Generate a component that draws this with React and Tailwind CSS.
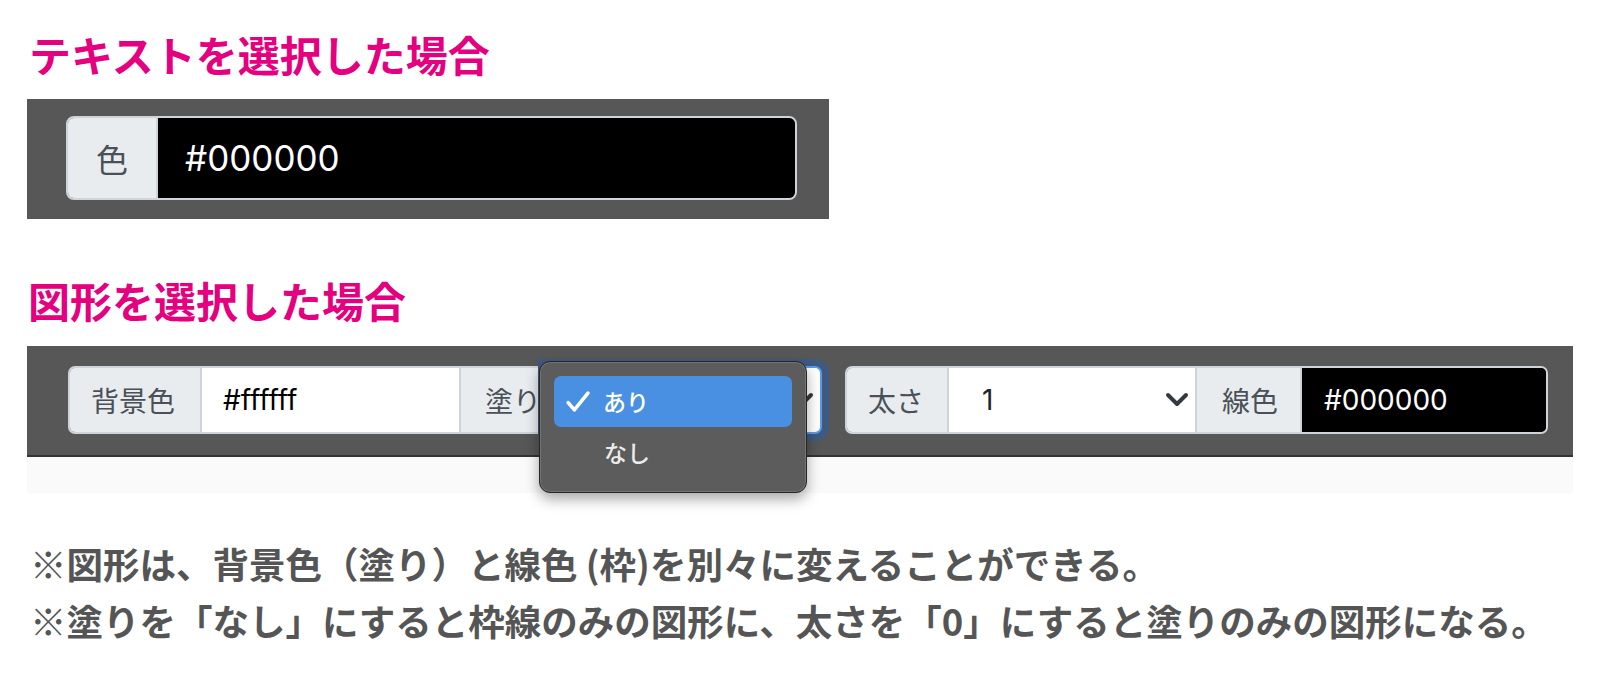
import React from 'react';

const jp = { fontFamily: '"Noto Sans CJK JP", "Noto Sans", sans-serif' };
const latin = { fontFamily: 'Inter, "Noto Sans CJK JP", sans-serif' };

const Chevron = ({ className }) => (
  <svg viewBox="0 0 24 16" className={className} fill="none">
    <path d="M3 3l9 9 9-9" stroke="#343a40" strokeWidth="4" strokeLinecap="round" strokeLinejoin="round" />
  </svg>
);

const Addon = ({ children, className }) => (
  <div
    style={jp}
    className={`flex items-center bg-[#e9ecef] text-[#495057] border-r-2 border-[#ced4da] ${className}`}
  >
    {children}
  </div>
);

const FillMenu = () => (
  <div
    style={jp}
    className="absolute left-[471px] top-[-5px] w-[268px] h-[132px] rounded-[11px] bg-[#5c5c5c] border border-[#262626] shadow-[inset_0_0_0_1px_#737373,0_6px_14px_rgba(0,0,0,0.35)] px-[14px] pt-[14px] z-10"
  >
    <div className="flex items-center h-[51px] rounded-[7px] bg-[#4a90e2] pl-[11px] gap-[13px] text-white text-[23px] font-medium">
      <svg viewBox="0 0 24 24" className="w-[25px] h-[25px]" fill="none">
        <path d="M3 13l6 7L22 4" stroke="white" strokeWidth="3.4" strokeLinecap="round" strokeLinejoin="round" />
      </svg>
      <span>あり</span>
    </div>
    <div className="flex items-center h-[51px] pl-[50px] text-[#ececec] text-[23px] font-medium">なし</div>
  </div>
);

const App = () => {
  return (
    <div className="w-[1600px] h-[684px] bg-white overflow-hidden pl-[27px]">
      <h2 style={jp} className="mt-[32px] text-[42px] leading-[44px] font-bold text-[#e4007f] pl-[2px]">
        テキストを選択した場合
      </h2>

      <div className="mt-[23px] w-[802px] h-[120px] bg-[#575757] pl-[39px] pt-[17px]">
        <div className="flex w-[731px] h-[84px] rounded-[8px] border-2 border-[#ced4da] overflow-hidden">
          <Addon className="w-[90px] justify-center text-[32px]">色</Addon>
          <div style={latin} className="flex-1 flex items-center bg-black text-white text-[35px] pl-[27px]">
            #000000
          </div>
        </div>
      </div>

      <h2 style={jp} className="mt-[59px] text-[42px] leading-[44px] font-bold text-[#e4007f] pl-[1px]">
        図形を選択した場合
      </h2>

      <div className="mt-[24px] w-[1546px]">
        <div className="h-[111px] bg-[#575757] border-b-2 border-[#333333] pl-[41px] pt-[20px] flex gap-[23px]">
          <div className="relative flex h-[68px]">
            <div className="flex h-[68px] w-[477px] rounded-l-[7px] border-2 border-r-0 border-[#ced4da] overflow-hidden">
              <Addon className="w-[132px] pl-[21px] text-[28px]">背景色</Addon>
              <div style={latin} className="w-[259px] flex items-center bg-white text-black text-[28px] pl-[21px] border-r-2 border-[#ced4da]">
                #ffffff
              </div>
              <Addon className="flex-1 pl-[24px] text-[28px] border-r-0">塗り</Addon>
            </div>
            <div className="w-[277px] h-[68px] rounded-r-[7px] bg-white border-2 border-[#5b9bea] shadow-[0_0_0_7px_#3e5a80] flex items-center justify-end pr-[6px]">
              <Chevron className="w-[24px] h-[16px]" />
            </div>
            <FillMenu />
          </div>

          <div className="flex h-[68px] w-[703px] rounded-[7px] border-2 border-[#ced4da] overflow-hidden">
            <Addon className="w-[102px] pl-[21px] text-[28px]">太さ</Addon>
            <div style={latin} className="w-[248px] flex items-center justify-between bg-white text-[#212529] text-[28px] pl-[33px] pr-[6px] border-r-2 border-[#ced4da]">
              <span>1</span>
              <Chevron className="w-[24px] h-[16px]" />
            </div>
            <Addon className="w-[105px] pl-[25px] text-[28px] border-r-0">線色</Addon>
            <div style={latin} className="flex-1 flex items-center bg-black text-white text-[28px] pl-[22px]">
              #000000
            </div>
          </div>
        </div>
        <div className="h-[36px] bg-[#fafafa]" />
      </div>

      <div style={jp} className="mt-[42px] pl-[3px] text-[36.5px] leading-[57px] font-bold text-[#555555]">
        <p>※図形は、背景色（塗り）と線色 (枠)を別々に変えることができる。</p>
        <p>※塗りを「なし」にすると枠線のみの図形に、太さを「0」にすると塗りのみの図形になる。</p>
      </div>
    </div>
  );
};

export default App;
